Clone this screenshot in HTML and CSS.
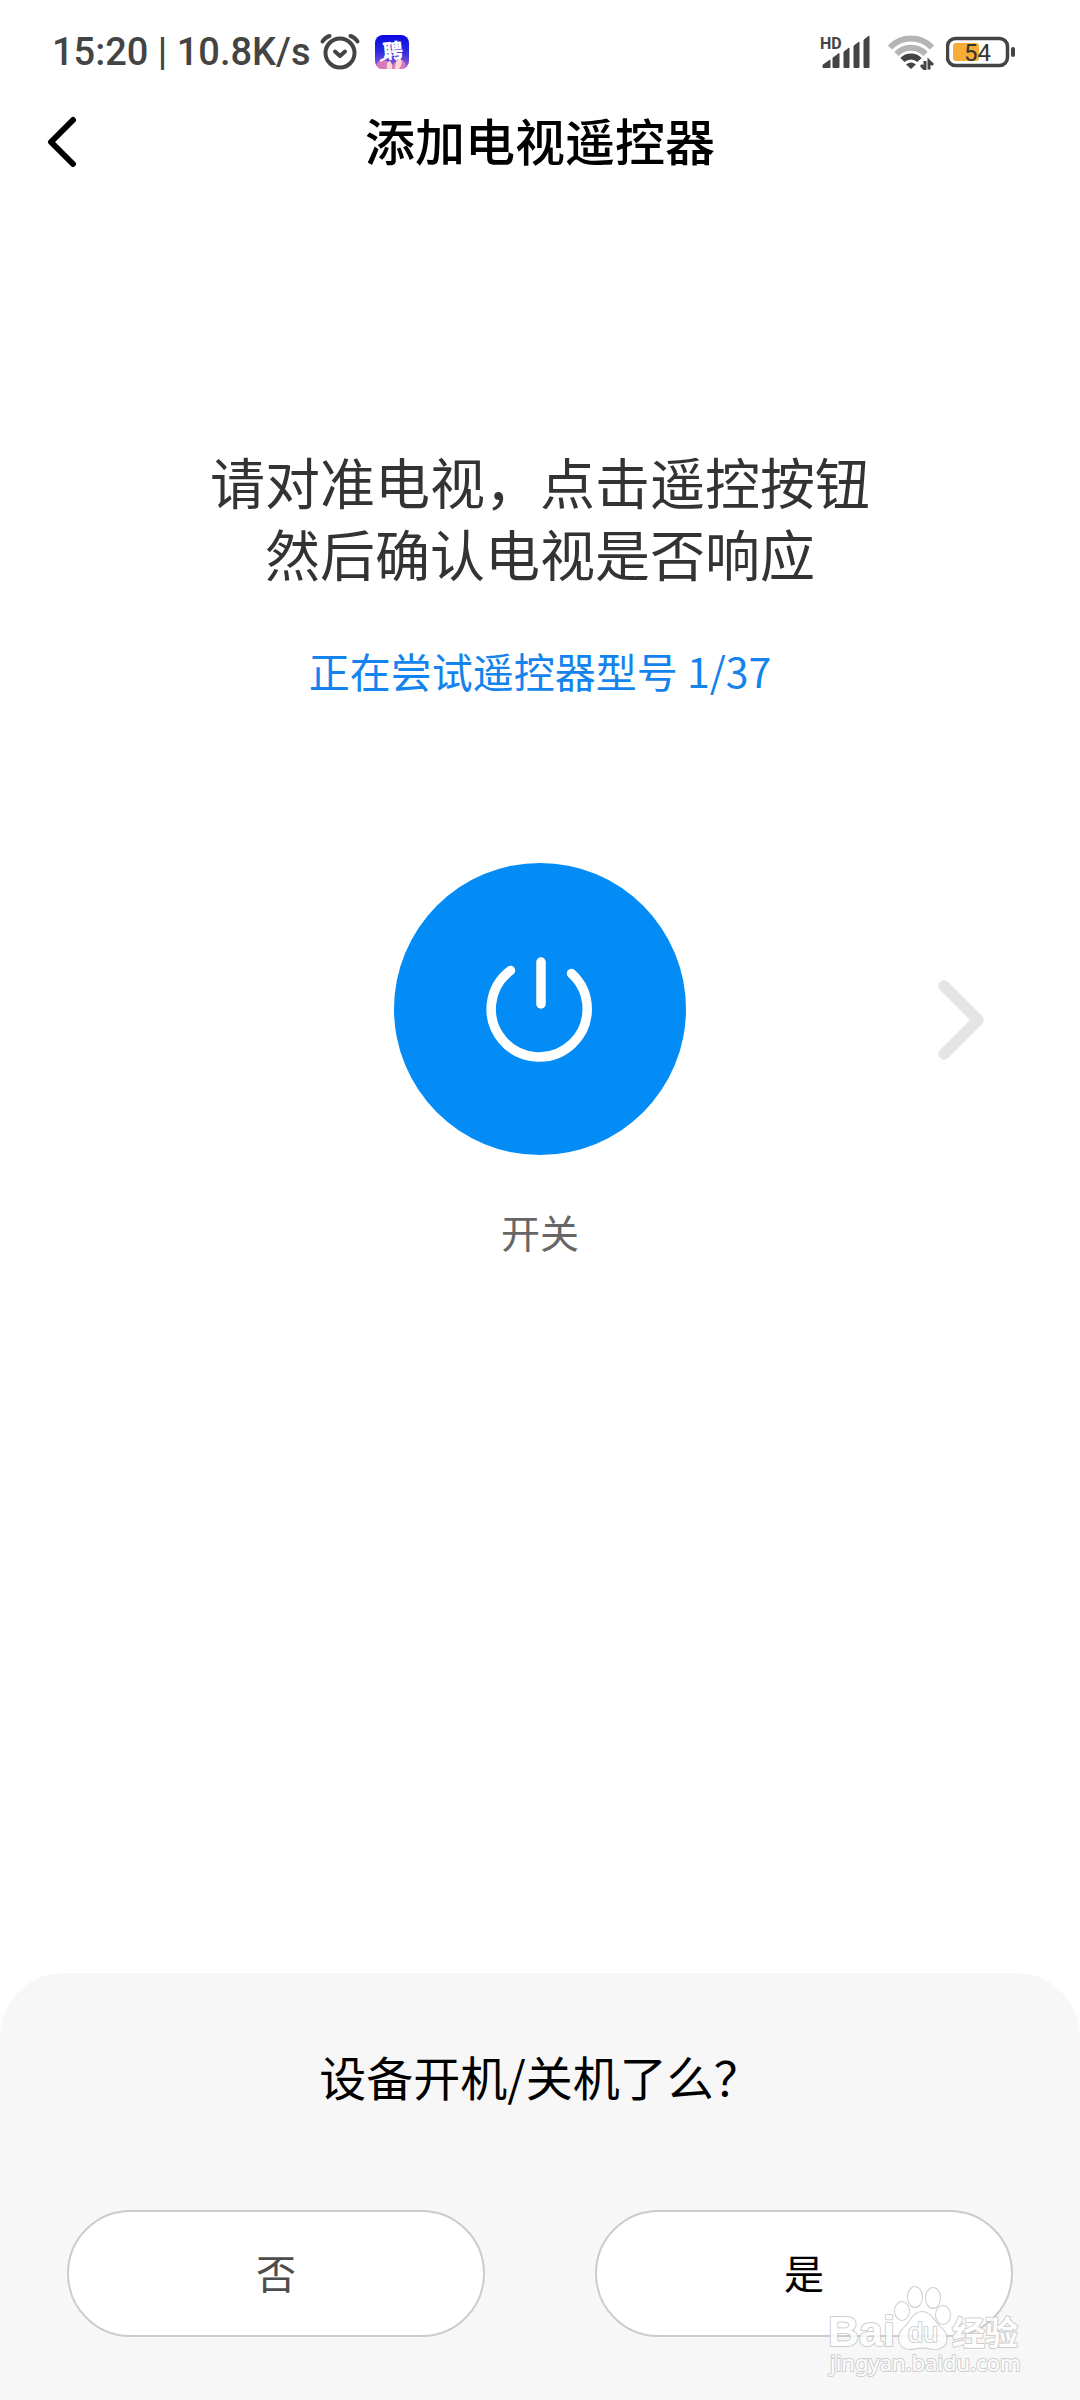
FILE: index.html
```html
<!DOCTYPE html>
<html lang="zh-CN">
<head>
  <meta charset="UTF-8" />
  <meta name="viewport" content="width=device-width, initial-scale=1.0" />
  <title>添加电视遥控器</title>
  <link rel="stylesheet" href="styles.css">
</head>
<body>

  <!-- 状态栏 -->
  <div class="status-bar">
    <div class="status-left">
      <span class="status-text">15:20 | 10.8K/s</span>
      <svg class="icon-alarm" width="42" height="40" viewBox="0 0 42 40" fill="none" stroke="#444" stroke-width="4" stroke-linecap="round" stroke-linejoin="round">
        <circle cx="21" cy="21" r="14.5" />
        <path d="M16 19.5l5 4.5 5-4.5" />
        <path d="M3.5 9.5Q6 5.500 10.500 4M38.500 9.500Q36 5.500 31.500 4" />
      </svg>
      <svg class="icon-app" width="34" height="34" viewBox="0 0 34 34">
        <defs>
          <linearGradient id="appBg" x1="0" y1="0" x2="0" y2="1">
            <stop offset="0" stop-color="#0a08e0" />
            <stop offset="0.5" stop-color="#2b2be0" />
            <stop offset="1" stop-color="#a765cf" />
          </linearGradient>
        </defs>
        <rect width="34" height="34" rx="8" fill="url(#appBg)" />
        <path d="M1 30Q5 23 12 26L17 30 22 26Q29 22 31 31L27 34H7Q3 34 1 30Z" fill="#d978bd" />
        <path d="M12 34Q11 26 15 26Q18 29 17 34ZM20 34Q20 25 25 23Q29 27 24 34Z" fill="#ffd6d2" />
        <text class="app-text" x="18" y="23" text-anchor="middle" transform="rotate(-6 17 17)">聘</text>
        <path d="M5 26L15 21M19 22L22 25" stroke="#fff" stroke-width="2" />
      </svg>
    </div>
    <div class="status-right">
      <svg class="icon-signal" width="52" height="36" viewBox="0 0 52 36" fill="#444">
        <text class="hd-text" x="0" y="15">HD</text>
        <path d="M3 33.500V31L10 26V33.500ZM13 33.500V24L19 19.500V33.500ZM24 33.500V18L29 14V33.500ZM34 33.500V12L39 8V33.500ZM44 33.500V6L49 2V33.500Z" stroke="#444" stroke-width="1" stroke-linejoin="round" />
      </svg>
      <svg width="48" height="36" viewBox="0 0 48 36" fill="none" stroke-width="6">
        <path d="M3 13.500A29 29 0 0 1 45 13.500" stroke="#b4b4b4" />
        <path d="M9.500 20A20 20 0 0 1 38.500 20" stroke="#b4b4b4" />
        <path d="M15.500 26A12 12 0 0 1 32.500 26" stroke="#444" />
        <path d="M24 35L19 30.500Q24 26.500 29 30.500Z" fill="#444" />
        <path d="M38 27V35.500L34 31M42 35.500V27L46 31" stroke="#444" stroke-width="3" />
      </svg>
      <svg width="70" height="32" viewBox="0 0 70 32">
        <rect x="1.500" y="2.500" width="60" height="27" rx="8" fill="#fff" stroke="#444" stroke-width="3.500" />
        <rect x="7" y="7" width="26" height="18" rx="3" fill="#f5ad35" />
        <rect x="65" y="11" width="4" height="10" rx="2" fill="#444" />
        <text class="battery-text" x="31.500" y="24.500" text-anchor="middle">54</text>
      </svg>
    </div>
  </div>

  <!-- 标题栏 -->
  <header class="header">
    <button class="back" type="button" aria-label="返回">
      <svg width="32" height="52" viewBox="0 0 32 52" fill="none" stroke="#000" stroke-width="6" stroke-linecap="round" stroke-linejoin="round">
        <path d="M27 4L5 26l22 22" />
      </svg>
    </button>
    <h1 class="title">添加电视遥控器</h1>
  </header>

  <main class="content">
    <p class="guide">请对准电视，点击遥控按钮<br>然后确认电视是否响应</p>
    <p class="progress">正在尝试遥控器型号 1/37</p>

    <div class="remote">
      <button class="power" id="power" type="button" aria-labelledby="power-label">
        <svg width="292" height="292" viewBox="0 0 292 292" fill="none" stroke="#fff" stroke-width="9.5" stroke-linecap="round">
          <path d="M116.500 107.500A48 48 0 1 0 177.500 110.500" />
          <path d="M147 99v42" />
        </svg>
      </button>
      <button class="next" type="button" aria-label="下一个">
        <svg width="46" height="80" viewBox="0 0 46 80" fill="none" stroke="#e5e5e5" stroke-width="11.5" stroke-linecap="round" stroke-linejoin="round">
          <path d="M6 6l34 34L6 74" />
        </svg>
      </button>
    </div>
    <p class="power-label" id="power-label">开关</p>
  </main>

  <!-- 底部确认面板 -->
  <section class="panel">
    <h2 class="question">设备开机/关机了么？</h2>
    <div class="actions">
      <button class="btn btn-no" type="button">否</button>
      <button class="btn" type="button">是</button>
    </div>
    <svg class="watermark" width="210" height="104" viewBox="0 0 210 104">
      <g fill="#fff" stroke="#c8c8c8" stroke-width="2" paint-order="stroke" stroke-linejoin="round">
        <text class="wm-bai" x="6" y="62">Bai</text>
        <ellipse cx="80" cy="27" rx="7" ry="9" />
        <ellipse cx="93" cy="13" rx="7" ry="10" />
        <ellipse cx="111" cy="14" rx="7" ry="10" />
        <ellipse cx="121" cy="31" rx="7" ry="9" />
        <path d="M100 28C109 28 113 39 119 44C129 53 125 66 111 65C103 63 98 63 90 65C77 66 73 53 82 44C89 38 91 28 100 28Z" />
        <text class="wm-du" x="101" y="58" text-anchor="middle">du</text>
        <text class="wm-cn" x="130" y="61">经验</text>
        <text class="wm-url" x="8" y="87">jingyan.baidu.com</text>
      </g>
    </svg>
  </section>

</body>
</html>
```
FILE: styles.css
```css
* {
  box-sizing: border-box;
}

body {
  margin: 0;
  min-height: 100vh;
  display: flex;
  flex-direction: column;
  background: #fff;
  color: #000;
  font-family: "Noto Sans CJK SC", sans-serif;
}

h1, h2, p {
  margin: 0;
  font-weight: 400;
}

button {
  padding: 0;
  border: none;
  background: none;
  font-family: inherit;
  cursor: pointer;
}

svg {
  display: block;
}

/* 状态栏 */
.status-bar {
  display: flex;
  justify-content: space-between;
  align-items: center;
  height: 104px;
  padding: 0 64px 0 52px;
}

.status-left,
.status-right {
  display: flex;
  align-items: center;
}

.status-text {
  color: #444;
  font-family: Roboto, sans-serif;
  font-size: 38px;
  font-weight: 500;
}

.icon-alarm {
  margin-left: 8px;
}

.icon-app {
  margin-left: 14px;
}

.app-text {
  font-size: 20px;
  font-weight: 900;
  fill: #fff;
}

.status-right {
  gap: 11px;
}

.icon-signal {
  margin-right: 4px;
}

.hd-text {
  font-family: Roboto, sans-serif;
  font-size: 16px;
  font-weight: 700;
}

.battery-text {
  font-family: Roboto, sans-serif;
  font-size: 24px;
  fill: #333;
}

/* 标题栏 */
.header {
  display: grid;
  grid-template-columns: 1fr auto 1fr;
  align-items: center;
  height: 76px;
  padding: 0 46px;
}

.back {
  justify-self: start;
}

.title {
  font-size: 50px;
  font-weight: 500;
  line-height: 70px;
  padding-bottom: 6px;
}

/* 内容 */
.content {
  flex: 1;
  padding-top: 264px;
  text-align: center;
}

.guide {
  font-size: 55px;
  line-height: 72px;
  color: #333;
}

.progress {
  margin-top: 52px;
  font-size: 41px;
  line-height: 60px;
  color: #1583ee;
}

.remote {
  display: grid;
  grid-template-columns: 1fr auto 1fr;
  align-items: center;
  margin-top: 163px;
}

.power {
  grid-column: 2;
  border-radius: 50%;
  background: #038cf5;
}

.next {
  justify-self: end;
  margin: 22px 96px 0 0;
}

.power-label {
  margin-top: 47px;
  font-size: 39px;
  line-height: 58px;
  color: #666;
}

/* 底部面板 */
.panel {
  position: relative;
  padding: 68px 67px 63px;
  border-radius: 64px 64px 0 0;
  background: #f7f7f7;
}

.question {
  font-size: 47px;
  line-height: 70px;
  text-align: center;
}

.actions {
  display: grid;
  grid-template-columns: 1fr 1fr;
  gap: 110px;
  margin-top: 99px;
}

.btn {
  height: 127px;
  padding-bottom: 4px;
  border: 2px solid #ccc;
  border-radius: 64px;
  background: #fff;
  color: #000;
  font-size: 40px;
}

.btn-no {
  color: #4d4d4d;
}

/* 水印 */
.watermark {
  position: absolute;
  right: 48px;
  bottom: 12px;
  opacity: 0.85;
  pointer-events: none;
}

.wm-bai {
  font-family: "Liberation Sans", sans-serif;
  font-size: 43px;
  font-weight: 700;
}

.wm-du {
  font-family: "Liberation Sans", sans-serif;
  font-size: 27px;
}

.wm-cn {
  font-size: 33px;
  font-weight: 700;
}

.wm-url {
  font-family: "Noto Sans", sans-serif;
  font-size: 22px;
}
```
